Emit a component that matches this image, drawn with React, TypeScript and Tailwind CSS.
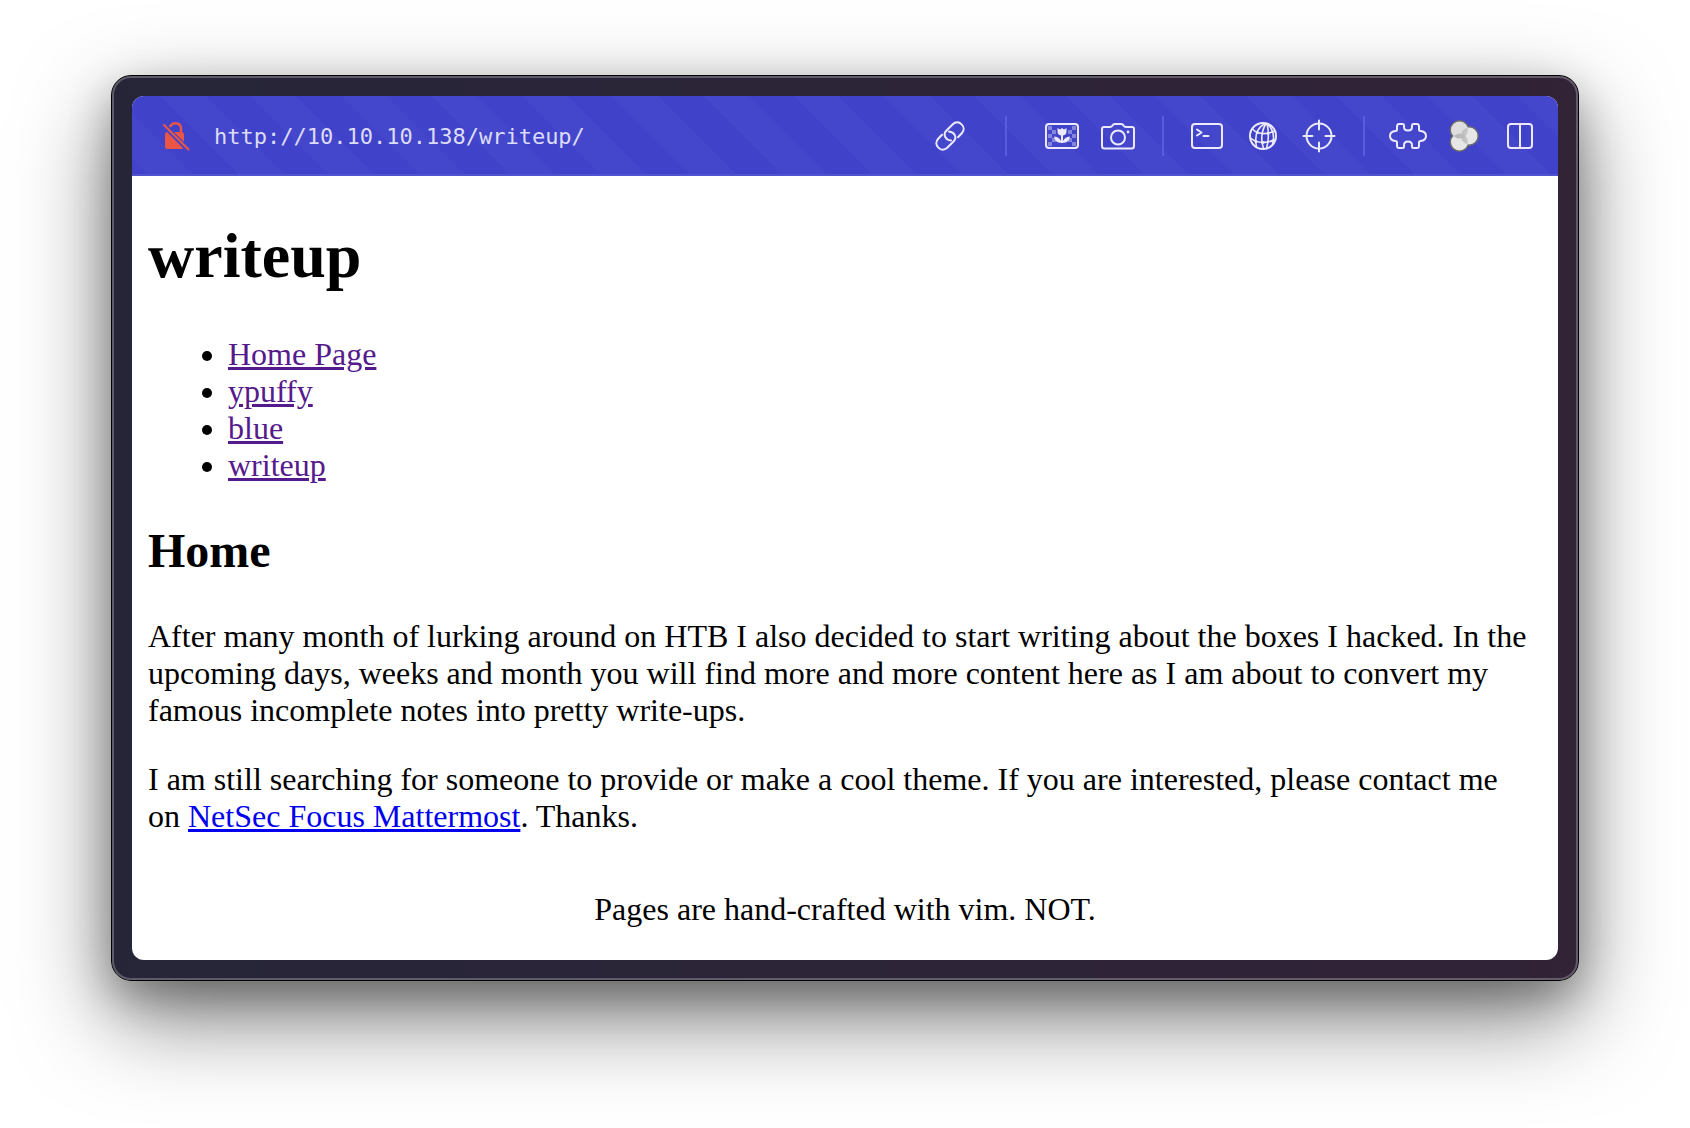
import React from "react";

function Icon({ className, viewBox, children }: { className: string; viewBox: string; children: React.ReactNode }) {
  return (
    <svg className={className} viewBox={viewBox} fill="none" stroke="currentColor" strokeWidth="2" strokeLinecap="round" strokeLinejoin="round" aria-hidden="true">
      {children}
    </svg>
  );
}

function ToolButton({ label, children }: { label: string; children: React.ReactNode }) {
  return (
    <button type="button" aria-label={label} className="flex h-10 w-10 items-center justify-center">
      {children}
    </button>
  );
}

function Divider() {
  return <div className="h-10 w-0.5 bg-[#5a5bdc]" />;
}

function InsecureIcon() {
  return (
    <Icon className="h-[30px] w-[28px] text-[#ea5545]" viewBox="0 0 28 30">
      <rect x="3" y="11" width="19" height="17" rx="2.500" fill="currentColor" stroke="none" />
      <path d="M8 6 Q9.500 2.200 13.500 2.200 Q19 2.200 19 8 V12.500" strokeWidth="2.400" strokeLinecap="butt" />
      <path d="M0 2.500 L28 30.500" stroke="#4245ca" strokeWidth="5" strokeLinecap="butt" />
      <path d="M2 4 L26.500 28.500" strokeWidth="2" />
    </Icon>
  );
}

function LinkIcon() {
  return (
    <Icon className="h-[30px] w-[30px]" viewBox="0 0 30 30">
      <path d="M16 19.500 C10.500 19 7.500 13.500 11.500 9.500 L17.800 3.200 C20.500 0.700 24 0.700 26.600 3.400 C29.300 6 29.300 9.500 26.800 12.200 L23 16.300" />
      <path d="M14 10.500 C19.500 11 22.500 16.500 18.500 20.500 L12.200 26.800 C9.500 29.300 6 29.300 3.400 26.600 C0.700 24 0.700 20.500 3.200 17.800 L7 13.700" />
    </Icon>
  );
}

const checks: [number, number][] = [
  [4, 4], [28, 4], [8, 8], [24, 8], [4, 12], [28, 12], [8, 16], [24, 16], [4, 20], [28, 20],
];

function TulipIcon() {
  return (
    <Icon className="h-[28px] w-[36px]" viewBox="0 0 36 28">
      {checks.map(([x, y]) => (
        <rect key={x + "-" + y} x={x} y={y} width="4" height="4" fill="currentColor" fillOpacity="0.4" stroke="none" />
      ))}
      <rect x="2" y="2" width="32" height="24" rx="3" />
      <path d="M13.500 6 L16 7.500 L18 6 L20 7.500 L22.500 6 V9.500 Q22.500 13 19 13.500 V21 H17 V13.500 Q13.500 13 13.500 9.500 Z" fill="currentColor" stroke="none" />
      <path d="M10 14.500 Q16 15 17.500 20.500 Q11 21.500 10 14.500 Z M26 14.500 Q20 15 18.500 20.500 Q25 21.500 26 14.500 Z" fill="currentColor" stroke="none" />
    </Icon>
  );
}

function CameraIcon() {
  return (
    <Icon className="h-[28px] w-[36px]" viewBox="0 0 36 28">
      <path d="M4 5 H10 Q11.500 5 12.500 3.500 Q13.300 2 15 2 H21 Q22.700 2 23.500 3.500 Q24.500 5 26 5 H32 Q34 5 34 7 V24 Q34 26.500 31.500 26.500 H4.500 Q2 26.500 2 24 V7 Q2 5 4 5 Z" />
      <circle cx="18" cy="15.500" r="7" />
      <circle cx="28" cy="10" r="1.400" fill="currentColor" stroke="none" />
    </Icon>
  );
}

function TerminalIcon() {
  return (
    <Icon className="h-[28px] w-[34px]" viewBox="0 0 34 28">
      <rect x="2" y="2" width="30" height="24" rx="3" />
      <path d="M7 7.500 L11.500 10.500 L7 13.500 M13.500 14 H18.500" />
    </Icon>
  );
}

function WebIcon() {
  return (
    <Icon className="h-[30px] w-[30px]" viewBox="0 0 30 30">
      <circle cx="15" cy="15" r="13" />
      <g strokeWidth="1.600">
        <path d="M17 2.500 Q5 9 8.500 26 M18 2.500 Q11 14 15.500 27.500 M19 2.500 Q22 16 18.500 27.500 M19.500 3 Q28 11 24.500 23.500" />
        <path d="M4.500 8 Q12 16 27 10 M2.500 17 Q12 25 27.500 18.500" />
      </g>
      <g fill="currentColor" stroke="none">
        <circle cx="9.500" cy="11.500" r="1.600" />
        <circle cx="8" cy="20.500" r="1.600" />
        <circle cx="20" cy="12.500" r="1.500" />
        <circle cx="15" cy="21.500" r="1.600" />
        <circle cx="24.500" cy="20" r="1.600" />
      </g>
    </Icon>
  );
}

function CrosshairIcon() {
  return (
    <Icon className="h-[34px] w-[34px]" viewBox="0 0 34 34">
      <circle cx="17" cy="17" r="12.500" />
      <path d="M17 1.500 V10.500 M17 23.500 V32.500 M1.500 17 H10.500 M23.500 17 H32.500" />
    </Icon>
  );
}

function PuzzleIcon() {
  return (
    <Icon className="h-[28px] w-[38px]" viewBox="0 0 38 28">
      <path d="M10 2 H14 Q15 2 15 3.500 V5 Q15 8.500 19 8.500 Q23 8.500 23 5 V3.500 Q23 2 24 2 H28 Q30 2 30 4.500 V7.500 Q30 9 31.500 9 Q37 9.500 37 14 Q37 18.500 31.500 19 Q30 19 30 20.500 V23.500 Q30 26 28 26 H24 Q23 26 23 24.500 V23 Q23 19.500 19 19.500 Q15 19.500 15 23 V24.500 Q15 26 14 26 H10 Q8 26 8 23.500 V20.500 Q8 19 6.500 19 Q1 18.500 1 14 Q1 9.500 6.500 9 Q8 9 8 7.500 V4.500 Q8 2 10 2 Z" />
    </Icon>
  );
}

function CirclesIcon() {
  return (
    <svg className="h-[32px] w-[30px]" viewBox="0 0 30 32" aria-hidden="true">
      <g fill="#e6e6e6" stroke="#696969" strokeWidth="2">
        <circle cx="10.500" cy="10" r="9" />
        <circle cx="10.500" cy="22" r="9" />
        <circle cx="20" cy="16" r="9" />
      </g>
      <g fill="#e6e6e6">
        <circle cx="20" cy="16" r="8.500" />
        <circle cx="10.500" cy="10" r="8.500" fill="#dedede" />
        <circle cx="10.500" cy="22" r="8.500" />
      </g>
      <path d="M18.300 7.800 A8.500 8.500 0 0 0 12 16 A8.500 8.500 0 0 0 18.300 24.200 A8.500 8.500 0 0 0 16.500 16 A8.500 8.500 0 0 0 18.300 7.800 Z" fill="#c4c4c4" />
      <path d="M4.500 16 Q10.500 11 16.500 16 Q10.500 21 4.500 16 Z" fill="#bababa" />
    </svg>
  );
}

function SplitIcon() {
  return (
    <Icon className="h-[28px] w-[28px]" viewBox="0 0 28 28">
      <rect x="2" y="2" width="24" height="24" rx="3" />
      <path d="M14 2 V26" />
    </Icon>
  );
}

function Toolbar() {
  return (
    <header className="flex h-20 items-center border-b-2 border-[#5052d0] bg-[repeating-linear-gradient(45deg,#4043c9_0px,#4043c9_11px,#4447cc_11px,#4447cc_43px,#4043c9_43px,#4043c9_64px)] pt-0.5 pr-[18px] pl-[30px] text-[#eceafa]">
      <InsecureIcon />
      <input
        aria-label="Address"
        type="text"
        defaultValue="http://10.10.10.138/writeup/"
        className="ml-6 min-w-0 flex-1 bg-transparent font-['DejaVu_Sans_Mono',monospace] text-[22px] text-[#dddcf8] outline-none"
      />
      <div className="flex items-center">
        <ToolButton label="Copy link"><LinkIcon /></ToolButton>
        <div className="mx-[35px]"><Divider /></div>
        <div className="flex gap-4">
          <ToolButton label="Images"><TulipIcon /></ToolButton>
          <ToolButton label="Capture"><CameraIcon /></ToolButton>
        </div>
        <div className="mr-[23px] ml-6"><Divider /></div>
        <div className="flex gap-4">
          <ToolButton label="Console"><TerminalIcon /></ToolButton>
          <ToolButton label="Network"><WebIcon /></ToolButton>
          <ToolButton label="Inspect element"><CrosshairIcon /></ToolButton>
        </div>
        <div className="mr-[23px] ml-6"><Divider /></div>
        <div className="flex gap-4">
          <ToolButton label="Extensions"><PuzzleIcon /></ToolButton>
          <ToolButton label="Containers"><CirclesIcon /></ToolButton>
          <ToolButton label="Split view"><SplitIcon /></ToolButton>
        </div>
      </div>
    </header>
  );
}

const pages = ["Home Page", "ypuffy", "blue", "writeup"];

export default function App() {
  return (
    <div className="min-h-screen overflow-hidden bg-white px-[111px] pt-[75px] pb-[147px]">
      <div className="rounded-[20px] border border-black bg-linear-to-r from-[#262538] to-[#322337] shadow-[0_36px_92px_rgba(0,0,0,0.52),0_16px_40px_rgba(0,0,0,0.26)]">
        <div className="rounded-[19px] border-2 border-white/25 p-[18px]">
          <div className="overflow-hidden rounded-xl bg-white">
            <Toolbar />
            <main className="px-4 pt-[43px] pb-8 font-['Liberation_Serif',serif] text-[32px] leading-[37px] text-black">
              <h1 className="text-[64px] leading-[74px] font-bold">writeup</h1>
              <ul className="mt-[43px] list-disc pl-20">
                {pages.map((page) => (
                  <li key={page}>
                    <a href="#" className="text-[#551a8b] underline">{page}</a>
                  </li>
                ))}
              </ul>
              <h2 className="mt-10 text-5xl leading-[54px] font-bold">Home</h2>
              <p className="mt-10 pr-2">
                After many month of lurking around on HTB I also decided to start writing about the boxes I hacked. In the upcoming days, weeks and month you will find more and more content here as I am about to convert my famous incomplete notes into pretty write-ups.
              </p>
              <p className="mt-8 pr-2">
                I am still searching for someone to provide or make a cool theme. If you are interested, please contact me on{" "}
                <a href="#" className="text-[#0000ee] underline">NetSec Focus Mattermost</a>. Thanks.
              </p>
              <footer className="mt-14 text-center">Pages are hand-crafted with vim. NOT.</footer>
            </main>
          </div>
        </div>
      </div>
    </div>
  );
}
